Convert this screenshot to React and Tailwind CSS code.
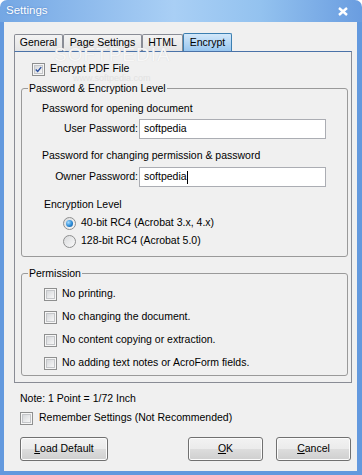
const tabs = [
  { label: 'General', w: 'w-[49px]' },
  { label: 'Page Settings', w: 'w-[79px]' },
  { label: 'HTML', w: 'w-[41px]' },
  { label: 'Encrypt', w: 'w-[49px]', active: true },
];

const permissions = [
  'No printing.',
  'No changing the document.',
  'No content copying or extraction.',
  'No adding text notes or AcroForm fields.',
];

function CheckBox({ checked }) {
  return (
    <span className="flex h-[13px] w-[13px] shrink-0 items-center justify-center border border-[#8e8f8f] bg-[#f6f6f6] p-[1px]">
      <span className="flex h-full w-full items-center justify-center border border-[#c4c6c9] bg-gradient-to-br from-[#d6d8db] to-[#f7f7f7]">
        {checked && (
          <svg width="9" height="9" viewBox="0 0 9 9">
            <path d="M1 4.5 L3.5 7 L8 1.5" fill="none" stroke="#2a4f9e" strokeWidth="1.8" />
          </svg>
        )}
      </span>
    </span>
  );
}

function Radio({ checked }) {
  return (
    <span className="flex h-[13px] w-[13px] shrink-0 items-center justify-center rounded-full border border-[#8e8f8f] bg-gradient-to-br from-[#d9dadc] to-[#fafafa]">
      {checked && (
        <span className="h-[7px] w-[7px] rounded-full bg-[radial-gradient(circle_at_35%_35%,#a6dcff,#2b8ad6_55%,#0b4f8f)]" />
      )}
    </span>
  );
}

function GroupBox({ title, className, children }) {
  return (
    <div className={`relative ml-[6px] flex w-[327px] flex-col rounded-[3px] border border-[#9a9a9a] ${className}`}>
      <span className="absolute left-[6px] top-[-8px] bg-[#f0f0f0] px-[1px] leading-[14px]">{title}</span>
      {children}
    </div>
  );
}

function Button({ children, className }) {
  return (
    <button className={`h-[24px] rounded-[3px] border border-[#707070] bg-[linear-gradient(#f2f2f2,#ebebeb_50%,#dddddd_50%,#cfcfcf)] shadow-[inset_0_0_0_1px_#fcfcfc] ${className}`}>
      {children}
    </button>
  );
}

export default function App() {
  return (
    <div className="h-[475px] w-[362px] bg-white font-['Liberation_Sans',Arial,sans-serif] text-[10.5px] text-black">
      <div className="flex h-[475px] w-[362px] flex-col overflow-hidden rounded-t-[7px]">
        <div className="flex h-[22px] shrink-0 items-center bg-[linear-gradient(to_right,#74a7e4,#a9cff5_48%,#93c2ef_72%,#6a9de0)]">
          <span className="ml-[6px] text-[11.5px] text-white [text-shadow:0_0_2px_#4a7cc0]">Settings</span>
          <svg className="ml-auto mr-[14px]" width="10" height="9" viewBox="0 0 10 9">
            <path d="M1 1 L9 8 M9 1 L1 8" stroke="white" strokeWidth="2.4" />
          </svg>
        </div>

        <div className="relative flex flex-1 flex-col border-b-4 border-l-4 border-r-[5px] border-[#6399de] bg-[#f0f0f0]">
          <div className="ml-[10px] mt-[11px] flex h-[18px] items-end">
            {tabs.map((t) =>
              t.active ? (
                <div key={t.label} className={`${t.w} relative flex h-[18px] items-center justify-center rounded-t-[2px] border border-b-0 border-[#3c7fb1] bg-gradient-to-b from-[#d3e8fa] to-[#98c6ef]`}>
                  {t.label}
                </div>
              ) : (
                <div key={t.label} className={`${t.w} flex h-[17px] items-center justify-center rounded-t-[2px] border border-b-0 border-[#898c95] bg-gradient-to-b from-[#f3f3f3] to-[#e4e4e4]`}>
                  {t.label}
                </div>
              )
            )}
          </div>

          <div className="ml-[10px] flex h-[332px] w-[338px] flex-col border border-[#898c95] border-t-[#4a72a8]">
            <div className="ml-[17px] mt-[9px] flex h-[16px] items-center">
              <CheckBox checked />
              <span className="ml-[5px]">Encrypt PDF File</span>
            </div>

            <GroupBox title="Password & Encryption Level" className="mt-[11px] h-[169px]">
              <div className="ml-[20px] mt-[12px] h-[14px] leading-[14px]">Password for opening document</div>
              <div className="ml-[20px] mt-[4px] flex h-[20px] items-center">
                <span className="w-[96px] text-right">User Password:</span>
                <div className="ml-[1px] flex h-[20px] w-[187px] items-center border border-[#abadb3] bg-white pl-[4px]">softpedia</div>
              </div>
              <div className="ml-[20px] mt-[9px] h-[14px] leading-[14px]">Password for changing permission &amp; password</div>
              <div className="ml-[20px] mt-[5px] flex h-[20px] items-center">
                <span className="w-[96px] text-right">Owner Password:</span>
                <div className="ml-[1px] flex h-[20px] w-[187px] items-center border border-[#abadb3] bg-white pl-[4px]">
                  softpedia<span className="h-[13px] w-px bg-black" />
                </div>
              </div>
              <div className="ml-[22px] mt-[10px] h-[14px] leading-[14px]">Encryption Level</div>
              <div className="ml-[41px] mt-[4px] flex h-[16px] items-center">
                <Radio checked />
                <span className="ml-[5px]">40-bit RC4 (Acrobat 3.x, 4.x)</span>
              </div>
              <div className="ml-[41px] mt-[2px] flex h-[16px] items-center">
                <Radio />
                <span className="ml-[5px]">128-bit RC4 (Acrobat 5.0)</span>
              </div>
            </GroupBox>

            <GroupBox title="Permission" className="mt-[16px] h-[103px] pt-[12px]">
              <div className="flex flex-col gap-[7px]">
                {permissions.map((p) => (
                  <div key={p} className="ml-[22px] flex h-[16px] items-center">
                    <CheckBox />
                    <span className="ml-[5px]">{p}</span>
                  </div>
                ))}
              </div>
            </GroupBox>
          </div>

          <div className="ml-[16px] mt-[8px] h-[14px] leading-[14px]">Note: 1 Point = 1/72 Inch</div>
          <div className="ml-[16px] mt-[5px] flex h-[16px] items-center">
            <CheckBox />
            <span className="ml-[6px]">Remember Settings (Not Recommended)</span>
          </div>

          <div className="ml-[16px] mt-[11px] flex">
            <Button className="w-[88px]"><u>L</u>oad Default</Button>
            <Button className="ml-[80px] w-[75px]"><u>O</u>K</Button>
            <Button className="ml-[13px] w-[75px]"><u>C</u>ancel</Button>
          </div>

          {/* faint watermark */}
          <span className="pointer-events-none absolute left-[50px] top-[23px] text-[19px] leading-[19px] tracking-[1px] text-[#f6f6f6] [text-shadow:0_0_1px_#d6d6d6]">SOFTPEDIA</span>
          <span className="pointer-events-none absolute left-[69px] top-[51px] text-[9px] leading-[10px] text-[#e2e2e2]">www.softpedia.com</span>
        </div>
      </div>
    </div>
  );
}
